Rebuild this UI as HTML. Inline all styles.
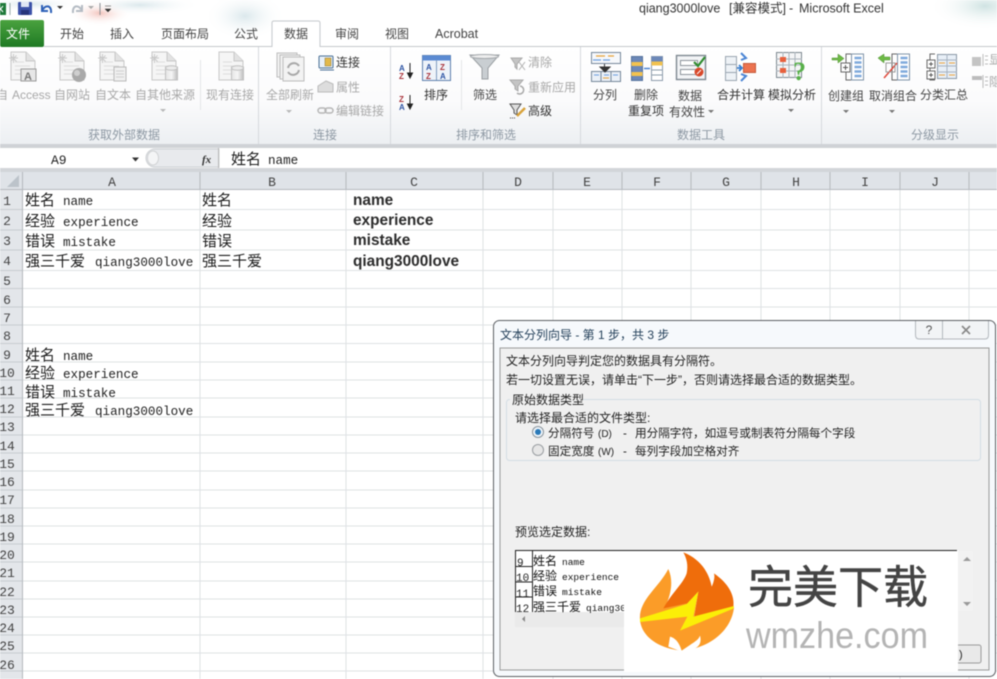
<!DOCTYPE html>
<html><head><meta charset="utf-8"><style>
html,body{margin:0;padding:0;background:#fff;width:997px;height:679px;overflow:hidden}
svg{position:absolute;left:0;top:0;filter:blur(.45px)}
text{font-family:"Liberation Sans","Noto Sans CJK SC",sans-serif;font-size:12px;fill:#444;white-space:pre}
.g{fill:#a8a8a8}.gl{fill:#8d98a3}.mid{text-anchor:middle}
.c{font-family:"Liberation Mono","Noto Sans CJK SC",monospace;font-size:15px;fill:#1c1c1c}
.m{font-family:"Liberation Mono",monospace;font-size:12.6px;fill:#222}
.b{font-family:"Liberation Sans",sans-serif;font-weight:bold;font-size:15.4px;fill:#2c2c2c}
.r{font-family:"Liberation Mono",monospace;font-size:13px;fill:#444;text-anchor:middle}
.d{font-size:12px;fill:#222}
.o{font-size:11.6px;fill:#222}
.p{font-family:"Liberation Mono",monospace;font-size:9.5px;fill:#111}
.pc{font-size:12px;fill:#111}
</style></head><body>
<svg width="997" height="679" viewBox="0 0 997 679" xmlns="http://www.w3.org/2000/svg">
<defs>
<linearGradient id="rib" x1="0" y1="0" x2="0" y2="1"><stop offset="0" stop-color="#fff"/><stop offset=".55" stop-color="#fbfbfc"/><stop offset="1" stop-color="#eceff2"/></linearGradient>
<linearGradient id="grn" x1="0" y1="0" x2="0" y2="1"><stop offset="0" stop-color="#4aa23f"/><stop offset="1" stop-color="#1f7a24"/></linearGradient>
<radialGradient id="teal"><stop offset="0" stop-color="#cfe3e2"/><stop offset="1" stop-color="#fff" stop-opacity="0"/></radialGradient>
<radialGradient id="redb"><stop offset="0" stop-color="#f3c4bd"/><stop offset="1" stop-color="#fff" stop-opacity="0"/></radialGradient>
<radialGradient id="blu"><stop offset="0" stop-color="#dbe8ec"/><stop offset="1" stop-color="#fff" stop-opacity="0"/></radialGradient>
<linearGradient id="cyl" x1="0" y1="0" x2="1" y2="0"><stop offset="0" stop-color="#e4e4e4"/><stop offset=".5" stop-color="#f6f6f6"/><stop offset="1" stop-color="#bdbdbd"/></linearGradient>
<g id="doc"><path d="M0 0H15L24 9V28H0Z" fill="#f5f5f5" stroke="#c8c8c8"/><path d="M15 0V9H24" fill="#e2e2e2" stroke="#c8c8c8"/><path d="M4 10H13M4 14H19M4 18H19M4 22H19" stroke="#dcdcdc"/></g>
<g id="spark"><path d="M0 4H9M4.500 0V9M1.500 1.500L7.500 7.500M7.500 1.500L1.500 7.500" stroke="#c9c9c9"/></g>
<g id="cy"><rect x="0" y="1" width="12" height="13" fill="url(#cyl)" stroke="#c0c0c0"/><ellipse cx="6" cy="2" rx="6" ry="2.200" fill="#ececec" stroke="#c0c0c0"/></g>
<g id="tbl"><rect x="0" y="0" width="12" height="26" fill="#fff" stroke="#7f93a8"/><path d="M3 4H10M3 8.500H10M3 13H10M3 17.500H10M3 22H10" stroke="#7fa9dc" stroke-width="2.500"/></g>
<path id="arr" d="M-3 0H3L0 3Z" fill="#777"/>
</defs>

<!-- title bar -->
<rect width="997" height="47" fill="#fff"/>
<ellipse cx="985" cy="6" rx="55" ry="24" fill="url(#teal)"/>
<ellipse cx="100" cy="13" rx="32" ry="13" fill="url(#redb)"/>
<ellipse cx="245" cy="16" rx="40" ry="24" fill="url(#blu)"/>
<ellipse cx="140" cy="5" rx="60" ry="10" fill="url(#blu)"/>
<ellipse cx="30" cy="4" rx="50" ry="8" fill="url(#blu)"/>
<rect x="-8" y="3" width="14" height="12" fill="#1f7a3a"/><path d="M-2 6L3 12M3 6L-2 12" stroke="#fff"/>
<path d="M10 3V15" stroke="#9aa"/>
<rect x="18" y="2" width="14" height="13" rx="1" fill="#3c52a8"/><rect x="21" y="2" width="8" height="5" fill="#dfe6f5"/><rect x="21" y="10" width="8" height="5" fill="#27357a"/>
<path d="M42 5V11H48M42 11C45 4 52 5 51 13" fill="none" stroke="#2f62b8" stroke-width="2"/>
<path d="M57 6H63L60 9Z" fill="#333"/>
<path d="M82 5V11H76M82 11C79 4 72 5 73 13" fill="none" stroke="#b5bcc4" stroke-width="2"/>
<path d="M88 6H94L91 9Z" fill="#aaa"/>
<path d="M100 3V15" stroke="#8a8f94"/><path d="M105 6H111M105 9H111L108 12Z" fill="#333" stroke="#333" stroke-width=".5"/>
<text y="12.500" style="fill:#333;font-size:12.500px"><tspan x="639">qiang3000love</tspan><tspan x="729">[兼容模式]</tspan><tspan x="789">-</tspan><tspan x="799">Microsoft Excel</tspan></text>

<!-- tabs -->
<rect x="0" y="20" width="44" height="27" rx="2" fill="url(#grn)"/>
<text x="6" y="38" style="fill:#fff">文件</text>
<text x="60" y="38">开始</text><text x="110" y="38">插入</text><text x="161" y="38">页面布局</text><text x="234" y="38">公式</text>
<path d="M44 46.500H272V23Q272 21 274 21H318Q320 21 320 23V46.500H997" fill="#fff" stroke="#c5c8cc"/>
<text x="284" y="38">数据</text><text x="335" y="38">审阅</text><text x="385" y="38">视图</text><text x="435" y="38" style="font-size:12.500px">Acrobat</text>

<!-- ribbon -->
<rect x="0" y="47" width="997" height="98" fill="url(#rib)"/>
<rect x="321" y="46" width="676" height="1" fill="#c5c8cc"/><rect x="45" y="46" width="227" height="1" fill="#c5c8cc"/>
<path d="M258.500 47V144M390.500 47V144M580.500 47V144M821.500 47V144" stroke="#d6d9dd"/>
<path d="M200.500 60V110M461.500 60V110" stroke="#e4e6e8"/>

<use href="#doc" x="11" y="52"/><use href="#spark" x="9" y="54"/>
<rect x="21" y="69" width="15" height="12" fill="#e7e7e7" stroke="#999"/><text x="24" y="80" style="font-size:11px;font-weight:bold;fill:#777">A</text>
<use href="#doc" x="60" y="52"/><use href="#spark" x="58" y="54"/><circle cx="79" cy="75" r="7" fill="#a9a9a9"/><circle cx="77" cy="73" r="3" fill="#cfcfcf"/>
<use href="#doc" x="100" y="52"/><use href="#spark" x="98" y="54"/><rect x="114" y="67" width="12" height="14" fill="#f0f0f0" stroke="#b9b9b9"/><path d="M116 71H124M116 74H124M116 77H124" stroke="#cfcfcf"/>
<use href="#doc" x="152" y="52"/><use href="#spark" x="150" y="54"/><use href="#cy" x="165.500" y="66"/>
<use href="#doc" x="219" y="52"/><use href="#cy" x="231.500" y="66"/>
<text x="-4" y="99" class="g">自<tspan x="12">Access</tspan></text><text x="54" y="99" class="g">自网站</text><text x="95" y="99" class="g">自文本</text><text x="135" y="99" class="g">自其他来源</text><text x="206" y="99" class="g">现有连接</text>
<use href="#arr" x="163" y="109" opacity=".5"/>
<text x="124" y="139" class="gl mid">获取外部数据</text>

<g fill="#f3f3f3" stroke="#bcbcbc"><rect x="277" y="53" width="20" height="24"/><rect x="280" y="55" width="20" height="24"/><rect x="283" y="57" width="21" height="24"/></g>
<path d="M288 68A6 6 0 0 1 299 66M299 70A6 6 0 0 1 288 72" fill="none" stroke="#a8a8a8" stroke-width="2"/>
<text x="266" y="99" class="g">全部刷新</text><use href="#arr" x="289" y="110" opacity=".5"/>
<rect x="319" y="56" width="14" height="12" rx="1" fill="#e8f0f8" stroke="#4a6f95"/><rect x="325" y="58" width="6" height="8" fill="#e3b94a" stroke="#8a7330" stroke-width=".5"/><path d="M320 70H334" stroke="#4a6f95"/>
<text x="336" y="66.500" style="fill:#333">连接</text>
<path d="M318 86L326 81L333 84V92H318Z" fill="#ddd" stroke="#bbb"/><text x="336" y="91.500" class="g">属性</text>
<rect x="318" y="108" width="8" height="5" rx="2.500" fill="none" stroke="#b5b5b5" stroke-width="1.500"/><rect x="325" y="108" width="8" height="5" rx="2.500" fill="none" stroke="#b5b5b5" stroke-width="1.500"/>
<text x="336" y="115" class="g">编辑链接</text>
<text x="325" y="139" class="gl mid">连接</text>

<text x="399" y="71" style="font-size:8px;font-weight:bold;fill:#2f55a4">A</text><text x="399" y="79" style="font-size:8px;font-weight:bold;fill:#a8323a">Z</text><path d="M410 63V76M407.500 73L410 78L412.500 73Z" stroke="#222" fill="#222"/>
<text x="399" y="102" style="font-size:8px;font-weight:bold;fill:#a8323a">Z</text><text x="399" y="110" style="font-size:8px;font-weight:bold;fill:#2f55a4">A</text><path d="M410 95V107M407.500 104L410 109L412.500 104Z" stroke="#222" fill="#222"/>
<rect x="422.500" y="55.500" width="28" height="25" fill="#eef3f9" stroke="#5f81ad"/><rect x="422.500" y="55.500" width="28" height="5" fill="#5b8ad2"/><path d="M436.500 60V80" stroke="#7f9cc0"/>
<text x="426" y="70" style="font-size:8px;font-weight:bold;fill:#2f55a4">A</text><text x="426" y="79" style="font-size:8px;font-weight:bold;fill:#a8323a">Z</text><text x="440" y="70" style="font-size:8px;font-weight:bold;fill:#a8323a">Z</text><text x="440" y="79" style="font-size:8px;font-weight:bold;fill:#2f55a4">A</text>
<text x="424" y="99" style="fill:#333">排序</text>
<path d="M470 55H499L488 68V79L482 79V68Z" fill="#c9ced2" stroke="#9a9fa3"/><ellipse cx="484.500" cy="56.500" rx="14" ry="2" fill="#eee" stroke="#a5a9ad"/>
<text x="473" y="99" style="fill:#444">筛选</text>
<path d="M511 58H522L517 64V69L515 67V64Z" fill="#c4c4c4" stroke="#aaa"/><path d="M519 62L525 70M525 62L519 70" stroke="#b0b0b0"/><text x="528" y="66.500" class="g">清除</text>
<path d="M510 80H523L518 86V91L515 89V86Z" fill="#c4c4c4" stroke="#aaa"/><path d="M520 86A4 4 0 1 1 517 93" fill="none" stroke="#aaa" stroke-width="1.500"/><text x="528" y="91.500" class="g">重新应用</text>
<path d="M510 104H521L517 110V115L514 113V110Z" fill="#ddd" stroke="#555"/><path d="M517 116L525 108" stroke="#d8a23a" stroke-width="2.500"/><path d="M510 118H516" stroke="#444" stroke-dasharray="1 1"/><text x="528" y="115" style="fill:#333">高级</text>
<text x="486" y="139" class="gl mid">排序和筛选</text>

<!-- data tools -->
<rect x="591.500" y="52.500" width="29" height="11" fill="#f6f8fb" stroke="#76879a"/><path d="M596 56H605M608 56H614" stroke="#e8a23a" stroke-width="1.200"/><path d="M593 60H601M603 60H610" stroke="#6d9fe0" stroke-width="1.200"/>
<rect x="591.500" y="71.500" width="29" height="10" fill="#eaf0f7" stroke="#76879a"/><path d="M601 71V82M611 71V82" stroke="#76879a"/><path d="M594 75H599M604 75H609M613 75H618" stroke="#6d9fe0"/><path d="M603 78H609" stroke="#e8a23a"/>
<path d="M604.500 64V67M600 67H610L605 72Z" fill="#333" stroke="#333"/>
<text x="593" y="99">分列</text>
<rect x="631.500" y="56.500" width="11" height="24" fill="#6c88b8" stroke="#55729c"/><rect x="631.500" y="62" width="11" height="4" fill="#f2c24f"/><rect x="631.500" y="72" width="11" height="4" fill="#f2c24f"/>
<rect x="651.500" y="56.500" width="11" height="24" fill="#fff" stroke="#8d9cab"/><rect x="651.500" y="56.500" width="11" height="5" fill="#6c88b8"/><rect x="651.500" y="61.500" width="11" height="4" fill="#f2c24f"/><path d="M652 70H662M652 75H662" stroke="#8d9cab"/>
<path d="M644 68.500H650" stroke="#4a84d4" stroke-width="1.500"/>
<text x="634" y="99">删除</text><text x="628" y="115" style="fill:#333">重复项</text>
<rect x="676.500" y="55.500" width="29" height="24" fill="#f2f4f6" stroke="#7e8891" stroke-width="1.400"/><rect x="680.500" y="60.500" width="17" height="5" fill="#fff" stroke="#8d959c"/><rect x="680.500" y="69.500" width="17" height="5" fill="#fff" stroke="#8d959c"/>
<path d="M694 62L698 66L705 57" fill="none" stroke="#2e8b2e" stroke-width="2.200"/><circle cx="699" cy="72" r="4.500" fill="#d8482a"/><path d="M697 74L701 70" stroke="#fff"/>
<text x="678" y="100">数据</text><text x="669" y="116">有效性</text><use href="#arr" x="711" y="110"/>
<g fill="#eef2f6" stroke="#9aa5b0"><rect x="725.500" y="56.500" width="11" height="8"/><rect x="725.500" y="64.500" width="11" height="8"/><rect x="725.500" y="72.500" width="11" height="8"/></g>
<rect x="743.500" y="63.500" width="12" height="9" fill="#ec7350" stroke="#c55a3a"/><path d="M737 68H742M739 65L742 68L739 71" fill="none" stroke="#3a7fd0" stroke-width="1.800"/>
<path d="M741 53L746 58L741 60" fill="none" stroke="#4a84d4" stroke-width="2"/><path d="M741 81L746 76L741 74" fill="none" stroke="#4a84d4" stroke-width="2"/>
<text x="717" y="99" style="fill:#333">合并计算</text>
<rect x="776.500" y="52.500" width="25" height="25" fill="#f4f5f6" stroke="#7d8890"/><path d="M776 59H802M776 65H802M776 71H802M783 52V78M789 52V78M795 52V78" stroke="#a9b2ba"/>
<rect x="780" y="57" width="6" height="5" fill="#e8603c"/><rect x="780" y="68" width="6" height="5" fill="#e8603c"/>
<text x="793" y="80" style="font-size:26px;font-weight:bold;fill:#58b04a;font-family:'Liberation Serif',serif">?</text>
<text x="768" y="99" style="fill:#333">模拟分析</text><use href="#arr" x="791" y="109"/>
<text x="701" y="139" class="gl mid">数据工具</text>

<!-- outline -->
<path d="M832 58H838V54L844 58.500L838 63V60H832Z" fill="#6dbb45" stroke="#4d8a30" stroke-width=".5"/>
<path d="M851 54H846V80H851" fill="none" stroke="#666"/><use href="#tbl" x="851.500" y="54"/><rect x="841" y="63" width="9" height="9" fill="#fff" stroke="#666"/><path d="M843 67.500H848M845.500 65V70" stroke="#555"/>
<path d="M878 58L884 54V57H890V60H884V63Z" fill="#6dbb45" stroke="#4d8a30" stroke-width=".5"/>
<path d="M898 54H892V80H898" fill="none" stroke="#666"/><use href="#tbl" x="897.500" y="54"/><path d="M884 78L897 63" stroke="#e0483a" stroke-width="1.500"/><rect x="886" y="63" width="9" height="9" fill="none" stroke="#999"/>
<path d="M935 54H930V80H935" fill="none" stroke="#666"/><rect x="927" y="60" width="8" height="8" fill="#fff" stroke="#666"/><rect x="927" y="71" width="8" height="8" fill="#fff" stroke="#666"/><path d="M929 64H933M931 62V66M929 75H933M931 73V77" stroke="#555"/>
<rect x="937.500" y="54.500" width="19" height="24" fill="#e8eff7" stroke="#8a98a6"/><path d="M937 60H957M937 66H957M937 72H957M947 54V79" stroke="#a5b2c0"/><path d="M939 63H945M949 63H955M939 75H945M949 75H955" stroke="#efa53c"/>
<text x="828" y="100" style="fill:#444">创建组</text><use href="#arr" x="846" y="110"/><text x="869" y="100" style="fill:#444">取消组合</text><use href="#arr" x="892" y="110"/><text x="920" y="99" style="fill:#444">分类汇总</text>
<path d="M972 57H981V66H972Z" fill="#c4c4c4"/><path d="M983 54V66M985 56H988M985 60H988M985 64H988" stroke="#bbb"/><text x="989" y="64" class="g">显</text>
<rect x="972" y="76" width="10" height="4" fill="#bcbcbc"/><path d="M983 75V88M985 77H988M985 81H988M985 85H988" stroke="#bbb"/><text x="989" y="86" class="g">隐</text>
<text x="935" y="139" class="gl mid">分级显示</text>

<!-- formula bar -->
<rect x="0" y="144" width="997" height="4" fill="#cfd2d6"/>
<rect x="0" y="148" width="997" height="20" fill="#fff"/>
<rect x="0" y="168" width="997" height="4" fill="#d2d5d9"/>
<text x="51" y="164" style="font-family:'Liberation Mono',monospace;font-size:13px;fill:#222">A9</text>
<path d="M132 157.500H139L135.500 161.500Z" fill="#333"/>
<path d="M155 149H219V167H155A9 9 0 0 1 155 149Z" fill="#e8eaed" stroke="#cdd0d3"/>
<ellipse cx="153" cy="158" rx="5.500" ry="7" fill="#f4f5f6" stroke="#d0d2d4"/>
<text x="202" y="163" style="font-family:'Liberation Serif',serif;font-style:italic;font-weight:bold;font-size:11px;fill:#333">fx</text>
<path d="M218.500 148V168" stroke="#bbb"/>
<text x="231" y="164" class="c">姓名<tspan x="268" class="m">name</tspan></text>

<!-- sheet -->
<rect x="0" y="172" width="997" height="507" fill="#fff"/>
<rect x="0" y="172" width="997" height="18" fill="#dfe3e8"/>
<rect x="0" y="190" width="22.500" height="489" fill="#e3e6ea"/>
<path d="M19 175V187H7Z" fill="#bcc3ca"/>
<g stroke="#dfe2e4" fill="none">
<path d="M23 209.500H997M23 230H997M23 250H997M23 270.500H997M23 288.500H997M23 307H997M23 325H997M23 343.500H997M23 362H997M23 380H997M23 398H997M23 417H997M23 435H997M23 453H997M23 471H997M23 490H997M23 508H997M23 526H997M23 544H997M23 562H997M23 581H997M23 599H997M23 617H997M23 635H997M23 653H997M23 671H997"/>
<path d="M200 190V679M346 190V679M483 190V679M553 190V679M622 190V679M691 190V679M761 190V679M830 190V679M900 190V679M969 190V679"/>
</g>
<g stroke="#b5b9be" fill="none">
<path d="M22.500 172V190M200 172V190M346 172V190M483 172V190M553 172V190M622 172V190M691 172V190M761 172V190M830 172V190M900 172V190M969 172V190M0 189.500H997M22.500 190V679"/>
<path d="M0 209.500H22M0 230H22M0 250H22M0 270.500H22M0 288.500H22M0 307H22M0 325H22M0 343.500H22M0 362H22M0 380H22M0 398H22M0 417H22M0 435H22M0 453H22M0 471H22M0 490H22M0 508H22M0 526H22M0 544H22M0 562H22M0 581H22M0 599H22M0 617H22M0 635H22M0 653H22M0 671H22" stroke="#c8ccd0"/>
</g>
<g>
<text x="112" y="186" class="r">A</text><text x="272" y="186" class="r">B</text><text x="414" y="186" class="r">C</text><text x="518" y="186" class="r">D</text><text x="587" y="186" class="r">E</text><text x="657" y="186" class="r">F</text><text x="726" y="186" class="r">G</text><text x="796" y="186" class="r">H</text><text x="865" y="186" class="r">I</text><text x="935" y="186" class="r">J</text>
<text x="7" y="205" class="r">1</text><text x="7" y="225" class="r">2</text><text x="7" y="245" class="r">3</text><text x="7" y="265" class="r">4</text><text x="7" y="285" class="r">5</text><text x="7" y="304" class="r">6</text><text x="7" y="322" class="r">7</text><text x="7" y="340" class="r">8</text><text x="7" y="359" class="r">9</text><text x="7" y="377" class="r">10</text><text x="7" y="395" class="r">11</text><text x="7" y="413" class="r">12</text><text x="7" y="431" class="r">13</text><text x="7" y="450" class="r">14</text><text x="7" y="468" class="r">15</text><text x="7" y="486" class="r">16</text><text x="7" y="504" class="r">17</text><text x="7" y="523" class="r">18</text><text x="7" y="541" class="r">19</text><text x="7" y="559" class="r">20</text><text x="7" y="577" class="r">21</text><text x="7" y="596" class="r">22</text><text x="7" y="614" class="r">23</text><text x="7" y="632" class="r">24</text><text x="7" y="650" class="r">25</text><text x="7" y="669" class="r">26</text>
</g>
<text x="25" y="205" class="c">姓名<tspan x="63" class="m">name</tspan></text>
<text x="25" y="226" class="c">经验<tspan x="63" class="m">experience</tspan></text>
<text x="25" y="246" class="c">错误<tspan x="63" class="m">mistake</tspan></text>
<text x="25" y="266" class="c">强三千爱<tspan x="95" class="m">qiang3000love</tspan></text>
<text x="25" y="360" class="c">姓名<tspan x="63" class="m">name</tspan></text>
<text x="25" y="378" class="c">经验<tspan x="63" class="m">experience</tspan></text>
<text x="25" y="397" class="c">错误<tspan x="63" class="m">mistake</tspan></text>
<text x="25" y="415" class="c">强三千爱<tspan x="95" class="m">qiang3000love</tspan></text>
<text x="202" y="205" class="c">姓名</text><text x="202" y="226" class="c">经验</text><text x="202" y="246" class="c">错误</text><text x="202" y="266" class="c">强三千爱</text>
<text x="353" y="205" class="b">name</text><text x="353" y="225" class="b">experience</text><text x="353" y="245" class="b">mistake</text><text x="353" y="266" class="b">qiang3000love</text>

<!-- dialog -->
<rect x="493.500" y="320.500" width="502" height="356" rx="6" fill="#f6f9fc" stroke="#5d6064"/>
<rect x="500" y="348" width="489" height="322" fill="#f0f0f0" stroke="#9a9a9a"/>
<text x="500" y="339" style="fill:#24405a">文本分列向导 - 第 1 步，共 3 步</text>
<path d="M915.500 321V335Q915.500 339 919 339H985Q988.500 339 988.500 335V321" fill="#f2f4f6" stroke="#b3b8bd"/><path d="M942.500 321V339" stroke="#b3b8bd"/>
<text x="929" y="334" class="mid" style="font-size:12px;fill:#555">?</text><path d="M962 326L970 334M970 326L962 334" stroke="#888" stroke-width="1.600"/>
<text x="506" y="365" class="d">文本分列向导判定您的数据具有分隔符。</text>
<text x="506" y="384" class="d" textLength="356">若一切设置无误，请单击“下一步”，否则请选择最合适的数据类型。</text>
<rect x="506.500" y="399.500" width="474" height="61" rx="3" fill="none" stroke="#d3dde4"/>
<rect x="510" y="394" width="73" height="10" fill="#f0f0f0"/>
<text x="512" y="404" class="d">原始数据类型</text>
<text x="515" y="422" class="d">请选择最合适的文件类型:</text>
<circle cx="538" cy="432" r="5.500" fill="#eef4f9" stroke="#8a949c"/><circle cx="538" cy="432" r="3" fill="#2a79b8"/>
<text x="548" y="437" class="o">分隔符号<tspan x="598" style="font-size:10px">(D)</tspan></text>
<text x="623" y="437" class="o">-<tspan x="635">用分隔字符，如逗号或制表符分隔每个字段</tspan></text>
<circle cx="538" cy="450" r="5.500" fill="#e6e6e6" stroke="#9a9ea2"/>
<text x="548" y="455" class="o">固定宽度<tspan x="598" style="font-size:10px">(W)</tspan></text>
<text x="623" y="455" class="o">-<tspan x="635">每列字段加空格对齐</tspan></text>
<text x="515" y="536" class="d">预览选定数据:</text>
<rect x="515" y="550" width="443" height="62" fill="#fff"/>
<path d="M515.500 612V550.500H957" fill="none" stroke="#222"/><path d="M532.500 551V612M515.500 566.500H532M515.500 582H532M515.500 597H532" stroke="#222"/>
<rect x="958" y="551" width="15" height="60" fill="#f2f2f2"/><rect x="515" y="612" width="443" height="15" fill="#eaeaea"/>
<path d="M522 619L525 616V622Z" fill="#888"/><path d="M963 561H971L967 557Z" fill="#999"/><path d="M963 602H971L967 606Z" fill="#999"/>
<text x="517" y="566" style="font-family:'Liberation Mono',monospace;font-size:11px;fill:#222">9</text><text x="516" y="581" style="font-family:'Liberation Mono',monospace;font-size:11px;fill:#222">10</text><text x="516" y="597" style="font-family:'Liberation Mono',monospace;font-size:11px;fill:#222">11</text><text x="516" y="612" style="font-family:'Liberation Mono',monospace;font-size:11px;fill:#222">12</text>
<text x="533" y="565" class="pc">姓名<tspan x="562" class="p">name</tspan></text>
<text x="533" y="580" class="pc">经验<tspan x="562" class="p">experience</tspan></text>
<text x="533" y="595" class="pc">错误<tspan x="562" class="p">mistake</tspan></text>
<text x="533" y="611" class="pc">强三千爱<tspan x="586" class="p">qiang30</tspan></text>
<rect x="940" y="645" width="41" height="18" rx="2" fill="#e9e9e9" stroke="#9a9a9a"/>
<text x="959" y="658" style="fill:#222;font-size:11px">)</text>

<!-- logo -->
<rect x="624" y="552" width="334" height="120" fill="#fff"/>
<g transform="translate(490 520) scale(.33333)">
<path d="M450 300C445 240 505 205 535 147C550 180 545 220 525 262L590 250L625 215L612 290L732 262C725 330 660 385 575 392C505 385 455 350 450 300Z" fill="#fb9c28"/>
<path d="M520 265C548 215 580 190 590 160C595 135 590 115 580 97C640 120 660 170 665 200C672 185 675 170 672 160C715 190 735 225 730 262L612 292L625 215L592 250Z" fill="#ef6d0b"/>
<path d="M450 295L590 252L625 215L610 290L732 258L730 266L570 332L592 290L450 306Z" fill="#fbef07"/>
<path d="M540 350C560 355 570 375 575 392L600 375C615 365 625 360 630 347C635 365 630 380 610 388L575 395L535 380Z" fill="#fff"/>
</g>
<text x="748" y="603" style="font-size:45px;fill:#444;stroke:#444;stroke-width:.5px">完美下载</text>
<text x="746" y="648" textLength="182" lengthAdjust="spacingAndGlyphs" style="font-size:37px;fill:#b4b4b4">wmzhe.com</text>
</svg>
</body></html>
